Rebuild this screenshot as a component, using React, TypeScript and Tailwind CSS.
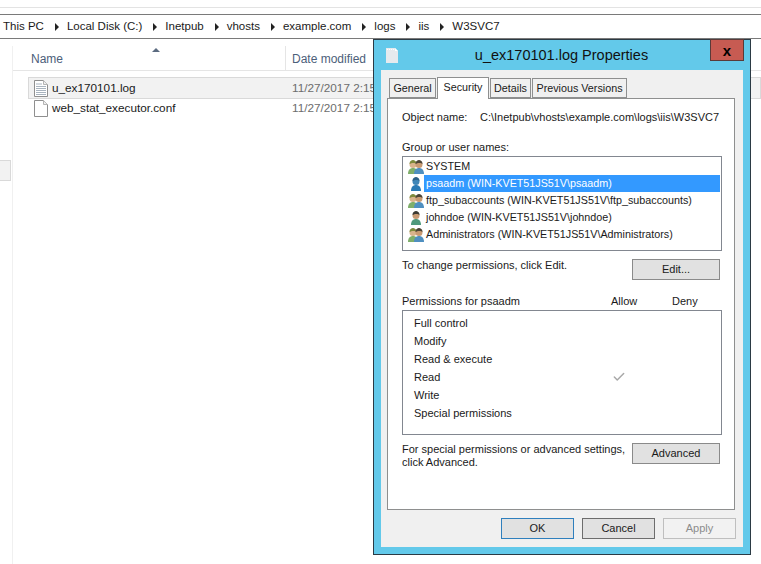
import { Check } from 'lucide-react';

const crumbs = ['This PC', 'Local Disk (C:)', 'Inetpub', 'vhosts', 'example.com', 'logs', 'iis', 'W3SVC7'];

const principals = [
  { label: 'SYSTEM', kind: 'group' },
  { label: 'psaadm (WIN-KVET51JS51V\\psaadm)', kind: 'admin', selected: true },
  { label: 'ftp_subaccounts (WIN-KVET51JS51V\\ftp_subaccounts)', kind: 'group' },
  { label: 'johndoe (WIN-KVET51JS51V\\johndoe)', kind: 'user' },
  { label: 'Administrators (WIN-KVET51JS51V\\Administrators)', kind: 'group' },
];

const permissions = ['Full control', 'Modify', 'Read & execute', 'Read', 'Write', 'Special permissions'];

const FileIcon = ({ lines = false }: { lines?: boolean }) => (
  <svg width="14" height="17" viewBox="0 0 14 17" fill="none" className="shrink-0">
    <path d="M.5.5h9l4 4v12H.5z" fill="#fff" stroke="#8f8f8f" />
    <path d="M9.500.5v4h4" fill="#eee" stroke="#b5b5b5" />
    {lines && <path d="M2 4h6M2 6.500h10M2 8.500h10M2 10.500h10M2 12.500h10M2 14.500h10" stroke="#a9b4bf" />}
  </svg>
);

const TitleFileIcon = () => (
  <svg width="12" height="15" viewBox="0 0 12 15">
    <path d="M0 0h9l3 3v12H0z" fill="#e6eaee" />
    <path d="M1 1h1v1H1zM3 1h1v1H3zM5 1h1v1H5zM7 1h1v1H7z" fill="#fff" />
    <path d="M9 0v3h3z" fill="#fff" />
  </svg>
);

const Person = ({ x, skin, hair, shirt }: { x: number; skin: string; hair: string; shirt: string }) => (
  <g transform={`translate(${x} 0)`}>
    <path d="M0 15c0-4 2-6 5-6s5 2 5 6z" fill={shirt} />
    <circle cx="5" cy="5.500" r="3.500" fill={skin} />
    <path d="M1.500 5c0-3 2-4 3.500-4s3.500 1 3.500 4c-1-1.500-5-1.500-7 0z" fill={hair} />
  </g>
);

const PrincipalIcon = ({ kind }: { kind: string }) => (
  <svg width="16" height="16" viewBox="0 0 16 16" className="shrink-0">
    {kind === 'group' && (
      <>
        <Person x={0} skin="#d9b48c" hair="#7d8a3c" shirt="#7fae6a" />
        <Person x={6} skin="#c89a72" hair="#4b4436" shirt="#4f8fc0" />
      </>
    )}
    {kind === 'admin' && <Person x={3} skin="#3f86b8" hair="#2c5f86" shirt="#2a7ab5" />}
    {kind === 'user' && <Person x={3} skin="#c89a72" hair="#3c3a32" shirt="#4f9a7c" />}
  </svg>
);

const DlgButton = ({ label, className }: { label: string; className: string }) => (
  <button className={`h-[21px] shrink-0 flex items-center justify-center border text-[11px] ${className}`}>{label}</button>
);

const Tab = ({ label, active, className }: { label: string; active?: boolean; className: string }) => (
  <div
    className={`flex items-center justify-center border border-[#8e8f8f] text-[10.750px] whitespace-nowrap ${
      active ? 'h-[22px] bg-white border-b-0 -mb-px z-10 relative pb-[3px]' : 'h-[20px] bg-[#f0f0f0]'
    } ${className}`}
  >
    {label}
  </div>
);

const App = () => {
  return (
    <div className="relative w-[761px] h-[564px] overflow-hidden bg-white text-[#1a1a1a] font-['Liberation_Sans',Arial,sans-serif]">
      {/* Explorer behind the dialog */}
      <div className="h-[7px] overflow-hidden border-b border-[#e3e3e3] box-content">
        <div className="flex -mt-[11px] text-[12px] leading-[14px] text-[#333]">
          <span className="w-[42px]">File</span>
          <span>View</span>
        </div>
      </div>
      <div className="h-[6px]" />
      <div className="h-[22px] box-content border-y border-[#7a7a7a] flex items-center pl-[3px] pt-[1px] text-[11.500px] whitespace-nowrap">
        {crumbs.map((crumb, i) => (
          <div key={crumb} className="flex items-center">
            <span>{crumb}</span>
            {i < crumbs.length - 1 && (
              <span className="ml-[11px] mr-[8px] w-0 h-0 border-y-[4px] border-y-transparent border-l-[4px] border-l-[#222]" />
            )}
          </div>
        ))}
      </div>

      <div className="flex mt-[7px]">
        <div className="w-[13px] h-[520px] border-r border-[#f0f0f0] pt-[114px]">
          <div className="w-[11px] h-[21px] bg-[#f2f2f2] border border-l-0 border-[#d9d9d9]" />
        </div>
        <div className="flex-1">
          <div className="relative h-[25px] flex items-center border-b border-[#e5e5e5] text-[12px] text-[#4c607a]">
            <span className="absolute left-[139px] top-[2px] w-0 h-0 border-x-[4px] border-x-transparent border-b-[4px] border-b-[#5b6b80]" />
            <div className="w-[273px] h-full flex items-center pl-[18px] pt-[1px] border-r border-[#e5e5e5]">Name</div>
            <div className="pl-[6px] pt-[1px]">Date modified</div>
          </div>
          <div className="mt-[6px] ml-[15px] text-[11.750px]">
            <div className="h-[22px] flex items-center bg-[#f2f2f2] border border-[#d9d9d9] pl-[5px]">
              <FileIcon lines />
              <span className="ml-[4px] w-[240px]">u_ex170101.log</span>
              <span className="text-[#6d6d6d] whitespace-nowrap">11/27/2017 2:15 PM</span>
            </div>
            <div className="h-[18px] flex items-center pl-[6px]">
              <FileIcon />
              <span className="ml-[4px] w-[240px]">web_stat_executor.conf</span>
              <span className="text-[#6d6d6d] whitespace-nowrap">11/27/2017 2:15 PM</span>
            </div>
          </div>
        </div>
      </div>

      {/* Properties dialog */}
      <div className="absolute left-[373px] top-[39px] w-[378px] h-[516px] border border-[#2b3a44] bg-[#63c9ea] flex flex-col">
        <div className="relative h-[30px] shrink-0 flex items-center justify-center text-[14.500px] text-[#111]">
          <span className="absolute left-[12px] top-[8px]">
            <TitleFileIcon />
          </span>
          <span className="-ml-[1px] mt-[2px]">u_ex170101.log Properties</span>
          <div className="absolute right-[6px] -top-px w-[34px] h-[22px] bg-[#c75b52] border border-[#5a3a38] flex items-center justify-center text-[15px] font-bold text-black leading-none">
            x
          </div>
        </div>

        <div className="mx-[7px] h-[477px] bg-[#f0f0f0] pt-[7px] px-[6px]">
          <div className="flex items-end pl-[2px] gap-px">
            <Tab label="General" className="w-[47px]" />
            <Tab label="Security" active className="w-[52px]" />
            <Tab label="Details" className="w-[41px]" />
            <Tab label="Previous Versions" className="w-[95px]" />
          </div>

          <div className="w-[348px] h-[412px] bg-white border border-[#8e8f8f] pl-[14px] pr-[12px] pt-[11px] text-[11px]">
            <div className="flex h-[14px] items-center whitespace-nowrap">
              <span className="w-[78px] shrink-0">Object name:</span>
              <span>C:\Inetpub\vhosts\example.com\logs\iis\W3SVC7</span>
            </div>

            <div className="mt-[16px] h-[14px] flex items-center">Group or user names:</div>
            <div className="mt-[2px] h-[95px] border border-[#828790] pt-[1px] pl-[5px] pr-[1px] text-[10.750px]">
              {principals.map(p => (
                <div key={p.label} className="h-[17px] flex items-center whitespace-nowrap">
                  <PrincipalIcon kind={p.kind} />
                  <span
                    className={`h-full flex-1 flex items-center pl-[2px] ${
                      p.selected ? 'bg-[#3399ff] text-white' : ''
                    }`}
                  >
                    {p.label}
                  </span>
                </div>
              ))}
            </div>

            <div className="mt-[8px] h-[21px] flex justify-between pr-[2px]">
              <span className="leading-[13px]">To change permissions, click Edit.</span>
              <DlgButton label="Edit..." className="w-[88px] bg-[#e1e1e1] border-[#8a8a8a]" />
            </div>

            <div className="mt-[14px] h-[14px] flex items-center">
              <span className="w-[209px]">Permissions for psaadm</span>
              <span className="w-[61px]">Allow</span>
              <span>Deny</span>
            </div>
            <div className="mt-[2px] h-[125px] border border-[#828790] pl-[11px] pt-[3px]">
              {permissions.map(name => (
                <div key={name} className="h-[18px] flex items-center">
                  <span className="w-[198px]">{name}</span>
                  {name === 'Read' && <Check size={14} strokeWidth={2.5} className="text-[#a8a8a8]" />}
                </div>
              ))}
            </div>

            <div className="mt-[8px] h-[21px] flex justify-between pr-[2px]">
              <span className="leading-[13px] whitespace-nowrap">
                For special permissions or advanced settings,
                <br />
                click Advanced.
              </span>
              <DlgButton label="Advanced" className="w-[88px] bg-[#e1e1e1] border-[#8a8a8a]" />
            </div>
          </div>

          <div className="mt-[8px] flex justify-end gap-[8px] pr-[1px]">
            <DlgButton label="OK" className="w-[73px] bg-[#e1e1e1] border-[#2f7fbd]" />
            <DlgButton label="Cancel" className="w-[73px] bg-[#e1e1e1] border-[#6d6d6d]" />
            <DlgButton label="Apply" className="w-[73px] bg-[#f2f2f2] border-[#bfbfbf] text-[#8c8c8c]" />
          </div>
        </div>
      </div>
    </div>
  );
};

export default App;
